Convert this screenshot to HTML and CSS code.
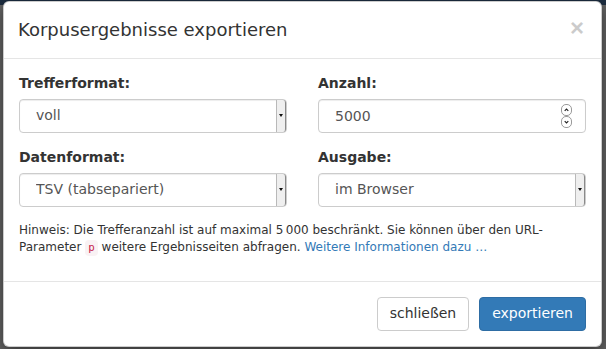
FILE: index.html
```html
<!doctype html>
<html lang="de">
  <head>
    <meta charset="UTF-8" />
    <meta name="viewport" content="width=device-width, initial-scale=1.0" />
    <title>Korpusergebnisse exportieren</title>
    <link rel="stylesheet" href="styles.css">
  </head>
  <body>
    <div class="backdrop">
      <div class="modal">
        <div class="modal-header">
          <h4 class="modal-title">Korpusergebnisse exportieren</h4>
          <button class="close" type="button" aria-label="Schließen">&times;</button>
        </div>

        <form class="modal-body">
          <div class="form-row">
            <div class="form-group">
              <label for="hitFormat">Trefferformat:</label>
              <div class="select-wrap">
                <select id="hitFormat" class="form-control">
                  <option>voll</option>
                  <option>kompakt</option>
                </select>
                <span class="select-btn"></span>
              </div>
            </div>
            <div class="form-group">
              <label for="count">Anzahl:</label>
              <div class="number-wrap">
                <input id="count" class="form-control" type="text" value="5000" />
                <span class="spin">
                  <span class="spin-btn">
                    <svg viewBox="0 0 10 10"><path d="M3 6 L5 4 L7 6" /></svg>
                  </span>
                  <span class="spin-btn">
                    <svg viewBox="0 0 10 10"><path d="M3 4 L5 6 L7 4" /></svg>
                  </span>
                </span>
              </div>
            </div>
          </div>

          <div class="form-row">
            <div class="form-group">
              <label for="dataFormat">Datenformat:</label>
              <div class="select-wrap">
                <select id="dataFormat" class="form-control">
                  <option>TSV (tabsepariert)</option>
                  <option>CSV</option>
                </select>
                <span class="select-btn"></span>
              </div>
            </div>
            <div class="form-group">
              <label for="output">Ausgabe:</label>
              <div class="select-wrap">
                <select id="output" class="form-control">
                  <option>im Browser</option>
                  <option>als Datei</option>
                </select>
                <span class="select-btn"></span>
              </div>
            </div>
          </div>

          <p class="hint">
            Hinweis: Die Trefferanzahl ist auf maximal 5&#8239;000 beschränkt. Sie können über den URL-Parameter
            <code>p</code> weitere Ergebnisseiten abfragen.
            <a href="#">Weitere Informationen dazu …</a>
          </p>
        </form>

        <div class="modal-footer">
          <button type="button" class="btn btn-default">schließen</button>
          <button type="button" class="btn btn-primary">exportieren</button>
        </div>
      </div>
    </div>
  </body>
</html>
```

FILE: styles.css
```css
* {
  margin: 0;
  padding: 0;
  box-sizing: border-box;
}

body {
  font-family: "DejaVu Sans", "Liberation Sans", sans-serif;
  font-size: 14px;
  line-height: 1.42857;
  color: #333;
  background: linear-gradient(#1c2d40 0, #1c2d40 5px, #656565 5px);
  min-height: 100vh;
}

.backdrop {
  padding: 1px 4px 0 3px;
}

.modal {
  background: #fff;
  border: 1px solid rgba(0, 0, 0, 0.2);
  border-radius: 6px;
  box-shadow: 0 5px 15px rgba(0, 0, 0, 0.5);
}

.modal-header {
  display: flex;
  align-items: center;
  justify-content: space-between;
  padding: 15px 15px 15px 14px;
  border-bottom: 1px solid #e5e5e5;
}

.modal-title {
  font-size: 18px;
  font-weight: 500;
  line-height: 1.42857;
}

.close {
  background: none;
  border: none;
  font-family: "Liberation Sans", sans-serif;
  font-size: 24px;
  font-weight: bold;
  line-height: 1;
  color: #000;
  opacity: 0.2;
  margin: -4px 2px 0 0;
  cursor: pointer;
}

.modal-body {
  padding: 15px;
}

.form-row {
  display: grid;
  grid-template-columns: 1fr 1fr;
  column-gap: 31px;
}

.form-group {
  margin-bottom: 15px;
}

label {
  display: block;
  font-weight: bold;
  margin-bottom: 5px;
}

.form-control {
  display: block;
  width: 100%;
  height: 34px;
  padding: 6px 12px 6px 16px;
  font: inherit;
  color: #555;
  background: #fff;
  border: 1px solid #ccc;
  border-radius: 4px;
  box-shadow: inset 0 1px 1px rgba(0, 0, 0, 0.075);
  appearance: none;
  -webkit-appearance: none;
}

.select-wrap,
.number-wrap {
  position: relative;
}

.select-btn {
  position: absolute;
  top: 1px;
  right: 1px;
  bottom: 1px;
  width: 10px;
  background: #efefef;
  border-left: 1px solid #b9b9b9;
  border-right: 1px solid #8a8a8a;
  border-radius: 0 3px 3px 0;
}

.select-btn::after {
  content: "";
  position: absolute;
  top: 14px;
  left: 2px;
  border-left: 2.5px solid transparent;
  border-right: 2.5px solid transparent;
  border-top: 3px solid #111;
}

.spin {
  position: absolute;
  top: 5px;
  right: 14px;
  display: flex;
  flex-direction: column;
}

.spin-btn {
  display: block;
  width: 11px;
  height: 12px;
  border: 1px solid #9a9a9a;
  border-radius: 5px;
  background: #fff;
}

.spin-btn svg {
  display: block;
  width: 9px;
  height: 10px;
  fill: none;
  stroke: #222;
  stroke-width: 1.3;
}

.hint {
  font-size: 12px;
  margin-bottom: 10px;
}

code {
  display: inline-block;
  font-family: "DejaVu Sans Mono", monospace;
  font-size: 90%;
  line-height: 14px;
  color: #c7254e;
  background: #f9f2f4;
  padding: 1px 3px;
  border-radius: 4px;
}

a {
  color: #337ab7;
  text-decoration: none;
}

.modal-footer {
  display: flex;
  justify-content: flex-end;
  gap: 10px;
  padding: 15px;
  border-top: 1px solid #e5e5e5;
}

.btn {
  height: 34px;
  padding: 6px 12px;
  font: inherit;
  border: 1px solid transparent;
  border-radius: 4px;
  cursor: pointer;
}

.btn-default {
  color: #333;
  background: #fff;
  border-color: #ccc;
}

.btn-primary {
  color: #fff;
  background: #337ab7;
  border-color: #2e6da4;
}
```
